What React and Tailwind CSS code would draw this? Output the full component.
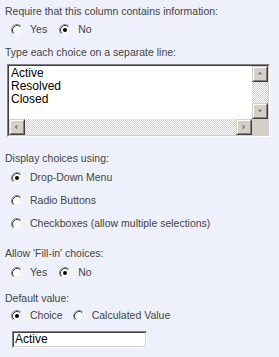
import React from "react";

const Radio = ({ checked }) => (
	<svg width="12" height="12" viewBox="0 0 12 12" className="shrink-0">
		<circle cx="6" cy="6" r="5" fill="#ffffff" />
		<path d="M2.11 9.89A5.5 5.5 0 0 1 9.89 2.11" fill="none" stroke="#8a8a8a" strokeWidth="1" />
		<path d="M2.82 9.18A4.5 4.5 0 0 1 9.18 2.82" fill="none" stroke="#404040" strokeWidth="1" />
		<path d="M9.89 2.11A5.5 5.5 0 0 1 2.11 9.89" fill="none" stroke="#ffffff" strokeWidth="1" />
		<path d="M9.18 2.82A4.5 4.5 0 0 1 2.82 9.18" fill="none" stroke="#e4e2dc" strokeWidth="1" />
		{checked && <circle cx="6" cy="6" r="2" fill="#000000" />}
	</svg>
);

const Option = ({ checked, label, className = "" }) => (
	<div className={"flex items-center h-[16px] " + className}>
		<Radio checked={checked} />
		<span className="ml-[7px] whitespace-nowrap">{label}</span>
	</div>
);

const Label = ({ children, className = "" }) => (
	<div className={"h-[13px] leading-[13px] whitespace-nowrap " + className}>{children}</div>
);

const Arrow = ({ dir }) => {
	const pts = {
		up: "4,6 8,6 6,4",
		down: "4,5 8,5 6,7",
		left: "6,4 6,8 4,6",
		right: "5,4 5,8 7,6",
	}[dir];
	return (
		<svg width="12" height="12" viewBox="0 0 12 12">
			<polygon points={pts} fill="#8c8c8c" stroke="#8c8c8c" strokeWidth="1" />
		</svg>
	);
};

const ScrollButton = ({ dir }) => (
	<div className="w-[16px] h-[16px] bg-[#d4d0c8] border border-t-[#d4d0c8] border-l-[#d4d0c8] border-b-[#404040] border-r-[#404040]">
		<div className="w-full h-full border border-t-white border-l-white border-b-[#808080] border-r-[#808080] flex items-center justify-center">
			<Arrow dir={dir} />
		</div>
	</div>
);

const track = "bg-[repeating-conic-gradient(#d4d0c8_0_25%,#ffffff_0_50%)] bg-[length:2px_2px]";

export default function App() {
	return (
		<div
			className="w-[279px] h-[357px] bg-[#eef1fb] text-[#444444] text-[10.5px] pl-[5px] pt-[5px] overflow-hidden"
			style={{ fontFamily: '"Liberation Sans", Arial, sans-serif' }}
		>
			<Label>Require that this column contains information:</Label>
			<div className="flex mt-[4px] pl-[6px]">
				<Option label="Yes" />
				<Option label="No" checked className="ml-[12px]" />
			</div>

			<Label className="mt-[8px]">Type each choice on a separate line:</Label>
			<div className="mt-[5px] ml-[2px] w-[263px] h-[73px] border border-t-[#808080] border-l-[#808080] border-b-white border-r-white">
				<div className="w-full h-full border border-t-[#404040] border-l-[#404040] border-b-[#d4d0c8] border-r-[#d4d0c8] bg-white flex flex-col">
					<div className="flex flex-1 min-h-0">
						<div className="flex-1 pl-[2px] pt-[1px] text-black text-[12px] leading-[13px]">
							<div>Active</div>
							<div>Resolved</div>
							<div>Closed</div>
						</div>
						<div className={"w-[16px] flex flex-col justify-between " + track}>
							<ScrollButton dir="up" />
							<ScrollButton dir="down" />
						</div>
					</div>
					<div className="flex h-[16px]">
						<div className={"flex-1 flex justify-between " + track}>
							<ScrollButton dir="left" />
							<ScrollButton dir="right" />
						</div>
						<div className="w-[16px] h-[16px] bg-[#d4d0c8]" />
					</div>
				</div>
			</div>

			<Label className="mt-[15px]">Display choices using:</Label>
			<div className="flex flex-col gap-[7px] mt-[5px] pl-[6px]">
				<Option label="Drop-Down Menu" checked />
				<Option label="Radio Buttons" />
				<Option label="Checkboxes (allow multiple selections)" />
			</div>

			<Label className="mt-[15px]">Allow 'Fill-in' choices:</Label>
			<div className="flex mt-[5px] pl-[6px]">
				<Option label="Yes" />
				<Option label="No" checked className="ml-[12px]" />
			</div>

			<Label className="mt-[11px]">Default value:</Label>
			<div className="flex mt-[3px] pl-[6px]">
				<Option label="Choice" checked />
				<Option label="Calculated Value" className="ml-[10px]" />
			</div>

			<div className="mt-[7px] ml-[7px] w-[135px] h-[17px] border border-t-[#808080] border-l-[#808080] border-b-white border-r-white">
				<div className="w-full h-full border border-t-[#404040] border-l-[#404040] border-b-[#d4d0c8] border-r-[#d4d0c8] bg-white pl-[1px] text-black text-[12px] leading-[13px]">
					Active
				</div>
			</div>
		</div>
	);
}
